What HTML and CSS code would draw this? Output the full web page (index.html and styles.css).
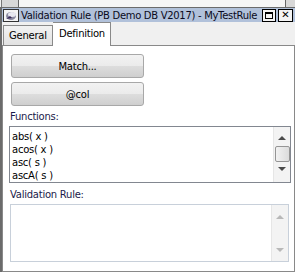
FILE: index.html
```html
<!DOCTYPE html>
<html lang="en">
<head>
  <meta charset="UTF-8">
  <title>Validation Rule</title>
  <link rel="stylesheet" href="styles.css">
</head>
<body>
  <div class="backdrop"><div class="backdrop-pane"></div></div>
  <div class="window">
    <div class="titlebar">
      <svg class="app-icon" width="16" height="13" viewBox="0 0 16 13">
        <rect x="0.5" y="0.5" width="15" height="12" fill="#f4f4f4" stroke="#333"/>
        <ellipse cx="8" cy="7" rx="5" ry="4" fill="#8a8aa0"/>
        <ellipse cx="9" cy="5.5" rx="4" ry="2.5" fill="#e8e8f0"/>
        <path d="M3 10 L7 7 L9 9 Z" fill="#3a2a5a"/>
      </svg>
      <span class="title">Validation Rule (PB Demo DB V2017) - MyTestRule</span>
      <div class="win-buttons">
        <button class="win-btn"><span class="max-glyph"></span></button>
        <button class="win-btn close">&#x2715;</button>
      </div>
    </div>
    <div class="tabs">
      <div class="tab">General</div>
      <div class="tab active">Definition</div>
    </div>
    <div class="panel">
      <button class="push">Match...</button>
      <button class="push">@col</button>
      <div class="label">Functions:</div>
      <div class="listbox">
        <ul class="items">
          <li>abs( x )</li>
          <li>acos( x )</li>
          <li>asc( s )</li>
          <li>ascA( s )</li>
        </ul>
        <div class="scrollbar">
          <span class="arrow up"></span>
          <span class="thumb"></span>
          <span class="arrow down"></span>
        </div>
      </div>
      <div class="label">Validation Rule:</div>
      <div class="editbox">
        <div class="editarea"></div>
        <div class="scrollbar disabled">
          <span class="arrow up"></span>
          <span class="arrow down"></span>
        </div>
      </div>
    </div>
  </div>
</body>
</html>
```

FILE: styles.css
```css
* { box-sizing: border-box; margin: 0; padding: 0; }
body {
  width: 295px;
  height: 272px;
  overflow: hidden;
  background-color: #f0f0f0;
  color: #000;
  font-family: "DejaVu Sans", Arial, sans-serif;
  font-size: 10px;
  letter-spacing: -0.25px;
}
.backdrop { height: 7px; background-color: #d8d8d8; border-left: 1px solid #777; margin-left: 1px; }
.backdrop-pane { height: 7px; margin: 0 9px 0 16px; background-color: #f6f6f6; border-left: 1px solid #666; border-right: 1px solid #666; }

.window {
  height: 265px;
  display: flex;
  flex-direction: column;
  border-left: 2px solid #6b6b6b;
  border-top: 1px solid #6b6b6b;
}

/* title bar */
.titlebar { height: 14px; display: flex; align-items: center; background-color: #b1c1da; padding-left: 1px; }
.app-icon { margin-right: 2px; flex-shrink: 0; }
.title { white-space: nowrap; color: #0a0a20; letter-spacing: -0.3px; }
.win-buttons { margin-left: auto; display: flex; gap: 2px; padding-right: 2px; }
.win-btn {
  width: 14px;
  height: 13px;
  border: 1px solid #000;
  background-color: #f4f4f4;
  display: flex;
  align-items: center;
  justify-content: center;
  font-family: "DejaVu Sans", sans-serif;
  font-size: 10px;
  font-weight: bold;
  line-height: 1;
}
.win-btn.close { width: 15px; }
.max-glyph { width: 8px; height: 7px; border: 1px solid #000; border-top-width: 2px; }

/* tabs */
.tabs { height: 23px; display: flex; align-items: flex-end; padding-left: 1px; position: relative; z-index: 1; }
.tab {
  height: 20px;
  width: 50px;
  padding-left: 5px;
  display: flex;
  align-items: center;
  background: linear-gradient(#f2f2f2, #e2e2e2);
  border: 1px solid #898989;
  border-bottom: none;
}
.tab.active { height: 24px; width: 58px; margin-bottom: -1px; background: #fff; border-left: none; padding: 0 0 3px 6px; }

/* page */
.panel {
  flex: 1;
  background-color: #fff;
  border: 1px solid #898989;
  padding: 8px 3px 0 8px;
}
.push {
  display: block;
  width: 133px;
  height: 24px;
  margin-bottom: 4px;
  border: 1px solid #a8a8a8;
  border-radius: 3px;
  background: linear-gradient(#f2f2f2 0%, #ebebeb 50%, #dddddd 51%, #cfcfcf 100%);
  font-family: inherit;
  font-size: 10px;
  letter-spacing: inherit;
  color: #000;
}
.label { height: 14px; line-height: 14px; margin-left: -1px; color: #1a1a4a; }
.listbox, .editbox { display: flex; margin: 2px 0 0 -2px; border: 1px solid #828790; }
.listbox { height: 57px; margin-bottom: 5px; }
.editbox { height: 58px; border-color: #c8d0da; margin-left: -1px; width: 279px; }
.items { flex: 1; list-style: none; padding: 3px 0 0 2px; }
.items li { height: 13px; line-height: 13px; white-space: nowrap; }
.editarea { flex: 1; }

/* scrollbars */
.scrollbar {
  width: 17px;
  display: flex;
  flex-direction: column;
  align-items: center;
  background-color: #f3f3f3;
  border-left: 1px solid #e6e6e6;
  padding: 9px 0 8px;
}
.thumb {
  width: 15px;
  height: 16px;
  margin: 6px 0 5px;
  border: 1px solid #959595;
  border-radius: 2px;
  background: linear-gradient(90deg, #f2f2f2, #dcdcdc);
}
.arrow { width: 0; height: 0; border-left: 4px solid transparent; border-right: 4px solid transparent; }
.arrow.up { border-bottom: 4px solid #4a4a4a; }
.arrow.down { border-top: 4px solid #4a4a4a; }
.scrollbar.disabled { justify-content: space-between; padding: 10px 0 9px; }
.scrollbar.disabled .arrow.up { border-bottom-color: #b8b8b8; }
.scrollbar.disabled .arrow.down { border-top-color: #b8b8b8; }
```
